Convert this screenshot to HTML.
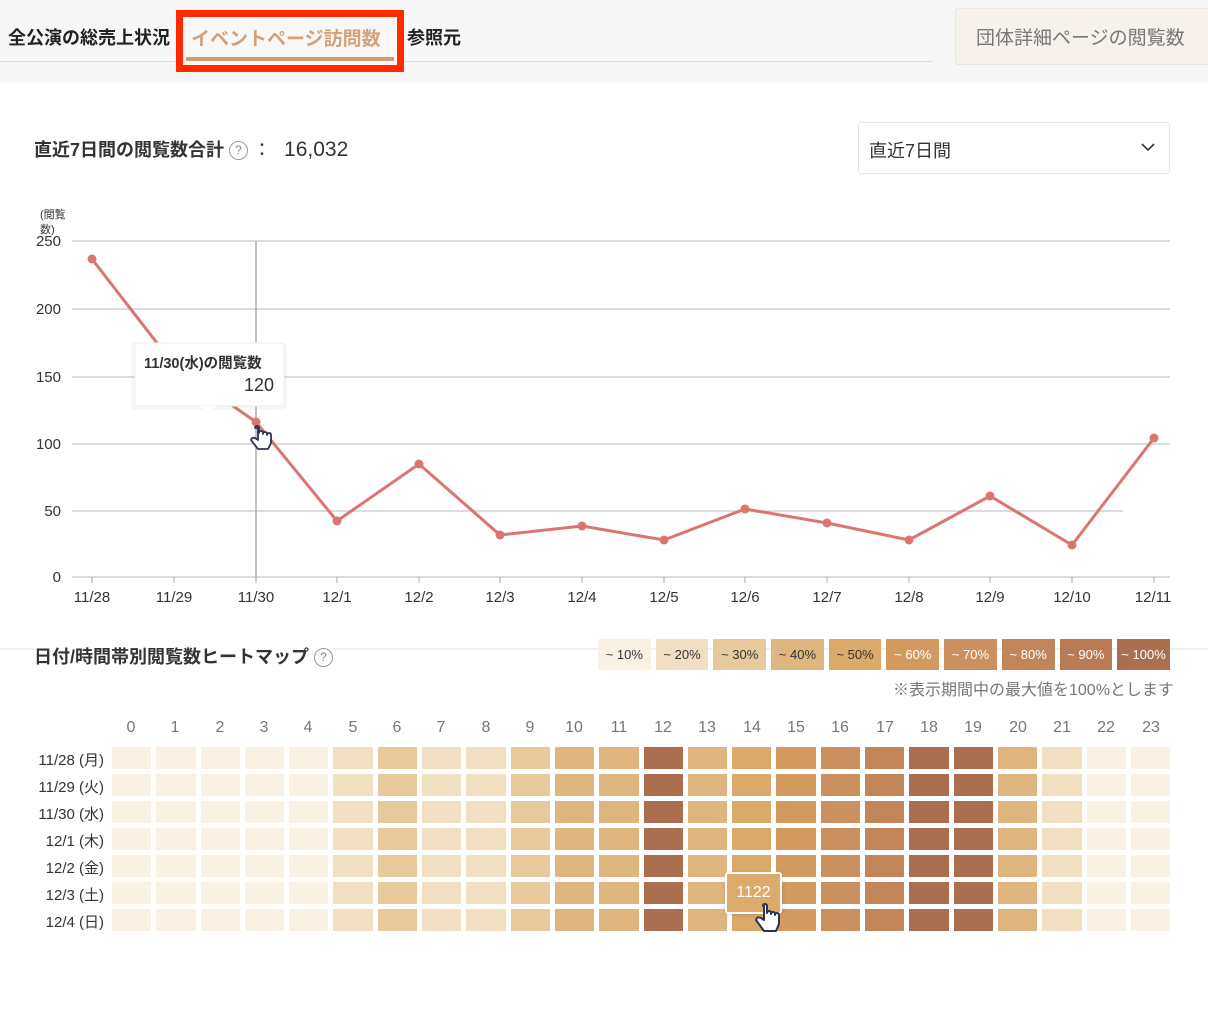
<!DOCTYPE html>
<html><head><meta charset="utf-8">
<style>
*{margin:0;padding:0;box-sizing:border-box}
body{width:1208px;height:1036px;background:#fff;font-family:"Liberation Sans","Noto Sans CJK JP",sans-serif;color:#333;position:relative;overflow:hidden}
.abs{position:absolute}
.top{left:0;top:0;width:1208px;height:83px;background:#f7f7f7}
.tabline{left:0;top:61px;width:933px;height:1px;background:#dcdcdc}
.tab{top:24px;font-size:18px;font-weight:bold;color:#222;white-space:nowrap}
.red{left:176px;top:10px;width:228px;height:62px;border:7px solid #ff2a00;background:#f9f8f6}
.btn{left:955px;top:8px;width:260px;height:57px;background:#f7f2ec;border:1px solid #ece6df;border-radius:3px;font-size:19px;color:#777;padding:14px 0 0 20px;white-space:nowrap}
.dd{left:858px;top:122px;width:312px;height:52px;border:1px solid #e4e4e4;border-radius:3px;font-size:18px;color:#333;padding:14px 0 0 10px}
.q{display:inline-block;width:19px;height:19px;border:1px solid #999;border-radius:50%;font-size:12px;color:#888;text-align:center;line-height:17px;font-weight:normal;vertical-align:2px}
.grid{left:112px;top:747px;display:grid;grid-template-columns:repeat(24,39.3px);column-gap:5px;row-gap:5px}
.grid div{height:22px}
.a{background:#f9f1e4}.b{background:#f1dfc1}.c{background:#e8c99c}.d{background:#e0b680}.e{background:#dba96a}.f{background:#d29a5f}.g{background:#cb9060}.h{background:#c2855a}.i{background:#b97b53}.j{background:#aa6f4f}
.leg{left:598px;top:639px;display:flex;gap:5px}
.leg div{width:52.7px;height:31px;font-size:13px;text-align:center;line-height:31px;color:#333}
.rl{left:0;width:104px;text-align:right;font-size:15px;color:#333}
.cl{top:719px;font-size:16px;color:#777;width:30px;text-align:center}
</style></head><body>
<div class="abs top"></div>
<div class="abs tabline"></div>
<div class="abs tab" style="left:8px">全公演の総売上状況</div>
<div class="abs red"></div>
<div class="abs tab" style="left:191px;color:#d3a27a;font-size:19px;top:24px">イベントページ訪問数</div>
<div class="abs" style="left:186px;top:57px;width:208px;height:4px;background:#d19b70"></div>
<div class="abs tab" style="left:407px">参照元</div>
<div class="abs btn">団体詳細ページの閲覧数</div>

<div class="abs" style="left:34px;top:136px;font-size:18px;font-weight:bold;color:#333;white-space:nowrap">直近7日間の閲覧数合計 <span class="q">?</span> <span style="font-weight:normal">：</span> <span style="font-weight:normal;font-size:21px;margin-left:8px">16,032</span></div>
<div class="abs dd">直近7日間<svg class="abs" style="left:282px;top:20px" width="14" height="9" viewBox="0 0 14 9"><path d="M1 1L7 7L13 1" fill="none" stroke="#333" stroke-width="1.6"/></svg></div>

<svg class="abs" style="left:0;top:0" width="1208" height="1036">
<g font-family="Liberation Sans,Noto Sans CJK JP,sans-serif" font-size="15" fill="#333">
<text x="40" y="218" font-size="11">(閲覧</text><text x="40" y="233" font-size="11">数)</text>
<g stroke="#c8c8c8" stroke-width="1.2">
<line x1="72" y1="241" x2="1170" y2="241"/><line x1="72" y1="309" x2="1170" y2="309"/><line x1="72" y1="377" x2="1170" y2="377"/><line x1="72" y1="444" x2="1170" y2="444"/><line x1="72" y1="511" x2="1123" y2="511"/><line x1="72" y1="577" x2="1170" y2="577"/>
<line x1="256" y1="241" x2="256" y2="580" stroke="#999"/>
</g>
<g text-anchor="end"><text x="61" y="246">250</text><text x="61" y="314">200</text><text x="61" y="382">150</text><text x="61" y="449">100</text><text x="61" y="516">50</text><text x="61" y="582">0</text></g>
<g stroke="#aaa"><line x1="92" y1="577" x2="92" y2="583"/><line x1="174" y1="577" x2="174" y2="583"/><line x1="256" y1="577" x2="256" y2="583"/><line x1="337" y1="577" x2="337" y2="583"/><line x1="419" y1="577" x2="419" y2="583"/><line x1="500" y1="577" x2="500" y2="583"/><line x1="582" y1="577" x2="582" y2="583"/><line x1="664" y1="577" x2="664" y2="583"/><line x1="745" y1="577" x2="745" y2="583"/><line x1="827" y1="577" x2="827" y2="583"/><line x1="909" y1="577" x2="909" y2="583"/><line x1="990" y1="577" x2="990" y2="583"/><line x1="1072" y1="577" x2="1072" y2="583"/><line x1="1154" y1="577" x2="1154" y2="583"/></g>
<g text-anchor="middle"><text x="92" y="602">11/28</text><text x="174" y="602">11/29</text><text x="256" y="602">11/30</text><text x="337" y="602">12/1</text><text x="419" y="602">12/2</text><text x="500" y="602">12/3</text><text x="582" y="602">12/4</text><text x="664" y="602">12/5</text><text x="745" y="602">12/6</text><text x="827" y="602">12/7</text><text x="909" y="602">12/8</text><text x="990" y="602">12/9</text><text x="1072" y="602">12/10</text><text x="1153" y="602">12/11</text></g>
<polyline fill="none" stroke="#dc7570" stroke-width="3" points="92,259 174,365 256,422 337,521 419,464 500,535 582,526 664,540 745,509 827,523 909,540 990,496 1072,545 1154,438"/>
<g fill="#dc7570"><circle cx="92" cy="259" r="4.5"/><circle cx="256" cy="422" r="4.5"/><circle cx="337" cy="521" r="4.5"/><circle cx="419" cy="464" r="4.5"/><circle cx="500" cy="535" r="4.5"/><circle cx="582" cy="526" r="4.5"/><circle cx="664" cy="540" r="4.5"/><circle cx="745" cy="509" r="4.5"/><circle cx="827" cy="523" r="4.5"/><circle cx="909" cy="540" r="4.5"/><circle cx="990" cy="496" r="4.5"/><circle cx="1072" cy="545" r="4.5"/><circle cx="1154" cy="438" r="4.5"/></g>
<rect x="131" y="343" width="156" height="67" fill="#000" opacity="0.03" rx="3"/>
<rect x="135" y="343" width="149" height="63" fill="#fff" stroke="#eee"/>
<path d="M200 406 L208 413 L216 406Z" fill="#fff"/>
<text x="144" y="368" font-size="14.5" font-weight="bold">11/30(水)の閲覧数</text>
<text x="274" y="391" font-size="18" text-anchor="end">120</text>
<path d="M258 428 v12 l-3 -2 q-3 -1 -4 2 l7 9 h10 l3 -6 v-8 q0 -2 -2 -2 -2 0 -2 2 v-1 q0 -2 -2 -2 -2 0 -2 2 v-1 q0 -2 -2 -2 -2 0 -2 2 v-5 q0 -2 -2 -2 -2 0 -2 2z" fill="#fff" stroke="#2c3450" stroke-width="1.8" stroke-linejoin="round"/>
<line x1="0" y1="649" x2="1208" y2="649" stroke="#e2e2e2"/>
</g></svg>

<div class="abs" style="left:34px;top:643px;font-size:18px;font-weight:bold;color:#333;white-space:nowrap;background:#fff">日付/時間帯別閲覧数ヒートマップ <span class="q">?</span></div>
<div class="abs leg"><div class="a">~ 10%</div><div class="b">~ 20%</div><div class="c">~ 30%</div><div class="d">~ 40%</div><div class="e">~ 50%</div><div class="f" style="color:#fff">~ 60%</div><div class="g" style="color:#fff">~ 70%</div><div class="h" style="color:#fff">~ 80%</div><div class="i" style="color:#fff">~ 90%</div><div class="j" style="color:#fff">~ 100%</div></div>
<div class="abs" style="left:893px;top:676px;font-size:16px;color:#777;white-space:nowrap">※表示期間中の最大値を100%とします</div>

<div class="abs cl" style="left:116px">0</div><div class="abs cl" style="left:160px">1</div><div class="abs cl" style="left:205px">2</div><div class="abs cl" style="left:249px">3</div><div class="abs cl" style="left:293px">4</div><div class="abs cl" style="left:338px">5</div><div class="abs cl" style="left:382px">6</div><div class="abs cl" style="left:426px">7</div><div class="abs cl" style="left:471px">8</div><div class="abs cl" style="left:515px">9</div><div class="abs cl" style="left:559px">10</div><div class="abs cl" style="left:604px">11</div><div class="abs cl" style="left:648px">12</div><div class="abs cl" style="left:692px">13</div><div class="abs cl" style="left:737px">14</div><div class="abs cl" style="left:781px">15</div><div class="abs cl" style="left:825px">16</div><div class="abs cl" style="left:870px">17</div><div class="abs cl" style="left:914px">18</div><div class="abs cl" style="left:958px">19</div><div class="abs cl" style="left:1003px">20</div><div class="abs cl" style="left:1047px">21</div><div class="abs cl" style="left:1091px">22</div><div class="abs cl" style="left:1136px">23</div>

<div class="abs rl" style="top:749px">11/28 (月)</div>
<div class="abs rl" style="top:776px">11/29 (火)</div>
<div class="abs rl" style="top:803px">11/30 (水)</div>
<div class="abs rl" style="top:830px">12/1 (木)</div>
<div class="abs rl" style="top:857px">12/2 (金)</div>
<div class="abs rl" style="top:884px">12/3 (土)</div>
<div class="abs rl" style="top:911px">12/4 (日)</div>

<div class="abs grid">
<div class="a"></div><div class="a"></div><div class="a"></div><div class="a"></div><div class="a"></div><div class="b"></div><div class="c"></div><div class="b"></div><div class="b"></div><div class="c"></div><div class="d"></div><div class="d"></div><div class="j"></div><div class="d"></div><div class="e"></div><div class="f"></div><div class="g"></div><div class="h"></div><div class="j"></div><div class="j"></div><div class="d"></div><div class="b"></div><div class="a"></div><div class="a"></div>
<div class="a"></div><div class="a"></div><div class="a"></div><div class="a"></div><div class="a"></div><div class="b"></div><div class="c"></div><div class="b"></div><div class="b"></div><div class="c"></div><div class="d"></div><div class="d"></div><div class="j"></div><div class="d"></div><div class="e"></div><div class="f"></div><div class="g"></div><div class="h"></div><div class="j"></div><div class="j"></div><div class="d"></div><div class="b"></div><div class="a"></div><div class="a"></div>
<div class="a"></div><div class="a"></div><div class="a"></div><div class="a"></div><div class="a"></div><div class="b"></div><div class="c"></div><div class="b"></div><div class="b"></div><div class="c"></div><div class="d"></div><div class="d"></div><div class="j"></div><div class="d"></div><div class="e"></div><div class="f"></div><div class="g"></div><div class="h"></div><div class="j"></div><div class="j"></div><div class="d"></div><div class="b"></div><div class="a"></div><div class="a"></div>
<div class="a"></div><div class="a"></div><div class="a"></div><div class="a"></div><div class="a"></div><div class="b"></div><div class="c"></div><div class="b"></div><div class="b"></div><div class="c"></div><div class="d"></div><div class="d"></div><div class="j"></div><div class="d"></div><div class="e"></div><div class="f"></div><div class="g"></div><div class="h"></div><div class="j"></div><div class="j"></div><div class="d"></div><div class="b"></div><div class="a"></div><div class="a"></div>
<div class="a"></div><div class="a"></div><div class="a"></div><div class="a"></div><div class="a"></div><div class="b"></div><div class="c"></div><div class="b"></div><div class="b"></div><div class="c"></div><div class="d"></div><div class="d"></div><div class="j"></div><div class="d"></div><div class="e"></div><div class="f"></div><div class="g"></div><div class="h"></div><div class="j"></div><div class="j"></div><div class="d"></div><div class="b"></div><div class="a"></div><div class="a"></div>
<div class="a"></div><div class="a"></div><div class="a"></div><div class="a"></div><div class="a"></div><div class="b"></div><div class="c"></div><div class="b"></div><div class="b"></div><div class="c"></div><div class="d"></div><div class="d"></div><div class="j"></div><div class="d"></div><div class="e"></div><div class="f"></div><div class="g"></div><div class="h"></div><div class="j"></div><div class="j"></div><div class="d"></div><div class="b"></div><div class="a"></div><div class="a"></div>
<div class="a"></div><div class="a"></div><div class="a"></div><div class="a"></div><div class="a"></div><div class="b"></div><div class="c"></div><div class="b"></div><div class="b"></div><div class="c"></div><div class="d"></div><div class="d"></div><div class="j"></div><div class="d"></div><div class="e"></div><div class="f"></div><div class="g"></div><div class="h"></div><div class="j"></div><div class="j"></div><div class="d"></div><div class="b"></div><div class="a"></div><div class="a"></div>
</div>

<div class="abs" style="left:725px;top:872px;width:57px;height:42px;background:#dcaa6a;border:2px solid #fff;border-radius:3px;box-shadow:0 1px 4px rgba(0,0,0,.15);color:#fff;font-size:16px;text-align:center;line-height:38px">1122</div>
<svg class="abs" style="left:755px;top:902px" width="32" height="40" viewBox="0 0 32 40"><path d="M9 4 v14 l-3 -2 q-4 -2 -5 2 l8 11 h12 l3 -7 v-9 q0 -2 -2 -2 -2 0 -2 2 v-1 q0 -2 -2 -2 -2 0 -2 2 v-1 q0 -2 -2 -2 -2 0 -2 2 v-7 q0 -2 -2 -2 -2 0 -2 2z" fill="#fff" stroke="#2c3450" stroke-width="2" stroke-linejoin="round"/></svg>
</body></html>
